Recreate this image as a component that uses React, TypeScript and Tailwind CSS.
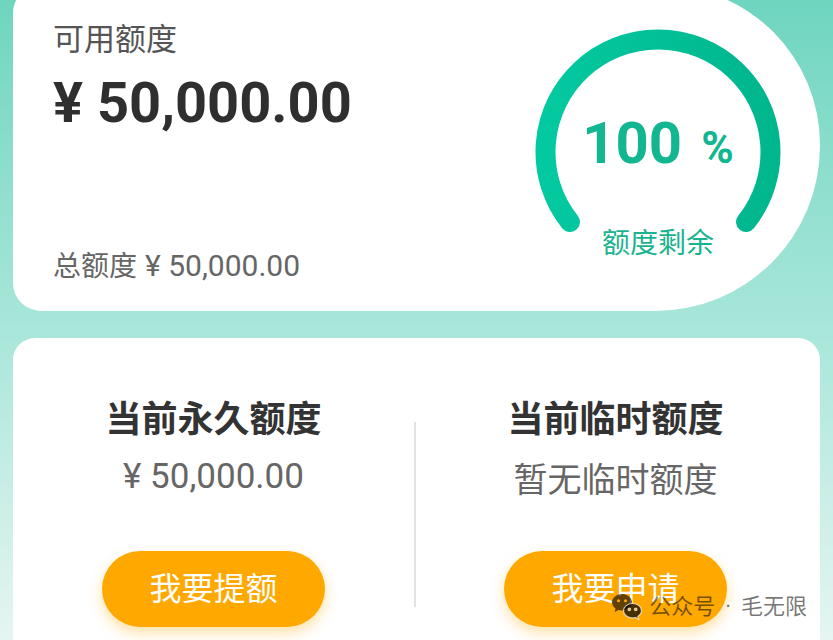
import React from "react";

function Gauge() {
  // arc spans ~257deg, ends 38.5deg below horizontal
  const r = 112.5;
  const a = (38.5 * Math.PI) / 180;
  const x1 = 125 - r * Math.cos(a);
  const x2 = 125 + r * Math.cos(a);
  const y = 125 + r * Math.sin(a);
  return (
    <div className="relative ml-auto mr-[37px] mt-[42px] w-[250px] h-[250px] shrink-0">
      <svg width="250" height="250" viewBox="0 0 250 250" className="absolute inset-0">
        <defs>
          <linearGradient id="arc" x1="0" y1="0" x2="1" y2="0">
            <stop offset="0" stopColor="#03c9a1" />
            <stop offset="1" stopColor="#00b68d" />
          </linearGradient>
        </defs>
        <path d={`M ${x1} ${y} A ${r} ${r} 0 1 1 ${x2} ${y}`} fill="none" stroke="url(#arc)" strokeWidth="20" strokeLinecap="round" />
      </svg>
      <div className="absolute inset-x-0 top-[87px] flex items-baseline justify-center gap-[19px] text-[#12b690] font-bold">
        <span className="text-[58px] leading-none">100</span>
        <span className="text-[44px] leading-none">%</span>
      </div>
      <div className="absolute inset-x-0 top-[203px] text-center text-[28px] leading-none text-[#1bb38e]">额度剩余</div>
    </div>
  );
}

function Column({ title, sub, subClass, btn, className }: { title: string; sub: string; subClass: string; btn: string; className: string }) {
  return (
    <div className={`flex flex-col items-center pt-[64px] ${className}`}>
      <div className="text-[36px] leading-none font-bold text-[#333]">{title}</div>
      <div className={`mt-[22px] h-[34px] leading-[34px] text-[#666] ${subClass}`}>{sub}</div>
      <button className="mt-[57px] w-[223px] h-[76px] rounded-full bg-[#ffa800] text-white text-[32px] flex items-center justify-center shadow-[0_6px_14px_rgba(255,168,0,0.35)]">
        {btn}
      </button>
    </div>
  );
}

function WeChatMark() {
  return (
    <svg width="32" height="27" viewBox="0 0 32 27">
      <g fill="#000" fillOpacity="0.62">
        <path
          fillRule="evenodd"
          d="M11 1C5.5 1 1 4.7 1 9.3c0 2.6 1.4 4.8 3.6 6.3L3.6 19l3.8-2.1c1.1.3 2.3.5 3.6.5 5.5 0 10-3.7 10-8.1C21 4.7 16.5 1 11 1zM7.5 6.2a1.5 1.5 0 1 0 0 3 1.5 1.5 0 0 0 0-3zm7 0a1.5 1.5 0 1 0 0 3 1.5 1.5 0 0 0 0-3z"
        />
      </g>
      <path
        fillRule="evenodd"
        fill="#000"
        fillOpacity="0.72"
        stroke="#fff"
        strokeOpacity="0.7"
        strokeWidth="1.2"
        d="M21.5 10.5c-5 0-9 3.2-9 7.2s4 7.2 9 7.2c1 0 2-.1 2.9-.4l3.3 1.8-.9-2.9c2-1.3 3.7-3.4 3.7-5.7 0-4-4-7.2-9-7.2zM18.3 15a1.3 1.3 0 1 0 0 2.6 1.3 1.3 0 0 0 0-2.6zm6.4 0a1.3 1.3 0 1 0 0 2.6 1.3 1.3 0 0 0 0-2.6z"
      />
    </svg>
  );
}

export default function App() {
  return (
    <div className="relative h-[640px] w-[833px] overflow-hidden px-[13px] bg-linear-to-b from-[#6ed5bf] via-[#a6e6d9] to-[#e5f5f2] font-[Roboto,'Noto_Sans_CJK_SC',sans-serif]">
      {/* top card */}
      <div className="-mt-[15px] h-[326px] bg-white rounded-l-[28px] rounded-tr-[160px] rounded-br-[165px] flex">
        <div className="flex flex-col pl-[40px] pt-[39px] pb-[30px]">
          <div className="text-[31px] leading-none text-[#555]">可用额度</div>
          <div className="mt-[20px] text-[56px] leading-none font-bold text-[#2f2f2f]">¥ 50,000.00</div>
          <div className="mt-auto flex items-baseline gap-[8px] leading-none text-[#666]">
            <span className="text-[28px]">总额度</span>
            <span className="text-[30px]">¥ 50,000.00</span>
          </div>
        </div>
        <Gauge />
      </div>

      {/* bottom card */}
      <div className="mt-[27px] h-[330px] rounded-[22px] bg-white flex">
        <Column className="w-[401px]" title="当前永久额度" sub="¥ 50,000.00" subClass="text-[35px]" btn="我要提额" />
        <div className="self-start mt-[84px] h-[185px] w-[2px] bg-[#e2e2e2]" />
        <Column className="flex-1 pr-[5px]" title="当前临时额度" sub="暂无临时额度" subClass="text-[34px] pt-[3px]" btn="我要申请" />
      </div>

      {/* watermark */}
      <div className="absolute right-[26px] bottom-[20px] flex items-center gap-[6px] text-[22px] leading-none text-black/55">
        <WeChatMark />
        <span>公众号</span>
        <span className="px-[4px]">·</span>
        <span>毛无限</span>
      </div>
    </div>
  );
}
